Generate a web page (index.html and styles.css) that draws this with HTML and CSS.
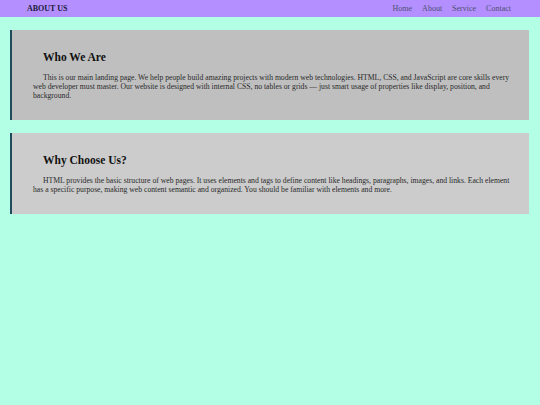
FILE: index.html
```html
<!DOCTYPE html>
<html>
<head>
<meta charset="utf-8">
<link rel="stylesheet" href="styles.css">
</head>
<body>
<nav class="navbar">
  <div class="brand">ABOUT US</div>
  <div class="links">
    <a href="#">Home</a>
    <a href="#">About</a>
    <a href="#">Service</a>
    <a href="#">Contact</a>
  </div>
</nav>
<main class="content">
  <section class="card card-a">
    <h2>Who We Are</h2>
    <p>This is our main landing page. We help people build amazing projects with modern web technologies. HTML, CSS, and JavaScript are core skills every web developer must master. Our website is designed with internal CSS, no tables or grids — just smart usage of properties like display, position, and background.</p>
  </section>
  <section class="card card-b">
    <h2>Why Choose Us?</h2>
    <p>HTML provides the basic structure of web pages. It uses elements and tags to define content like headings, paragraphs, images, and links. Each element has a specific purpose, making web content semantic and organized. You should be familiar with elements and more.</p>
  </section>
</main>
</body>
</html>
```

FILE: styles.css
```css
* { box-sizing: border-box; }
html, body {
  margin: 0;
  padding: 0;
  background: #b3ffe6;
  font-family: "Liberation Serif", "Times New Roman", serif;
}
.navbar {
  display: flex;
  align-items: center;
  justify-content: space-between;
  height: 17px;
  padding: 0 29px 0 27px;
  background: #b38fff;
}
.brand {
  font-size: 8px;
  font-weight: bold;
  color: #1c1c3a;
}
.links {
  display: flex;
  gap: 10px;
}
.links a {
  font-size: 8px;
  color: #4f4f6f;
  text-decoration: none;
}
.content {
  padding: 13px 11px 0 10px;
  display: flex;
  flex-direction: column;
  gap: 13px;
}
.card {
  border-left: 2px solid #1d4d5a;
  padding: 21px 11px 20px 21px;
  text-indent: 10px;
}
.card-a { background: #bfbfbf; }
.card-b { background: #cccccc; }
.card h2 {
  margin: 0 0 10px;
  font-size: 11.5px;
  font-weight: bold;
  color: #111;
}
.card p {
  margin: 0;
  font-size: 7.68px;
  color: #2a2a2a;
}
```
